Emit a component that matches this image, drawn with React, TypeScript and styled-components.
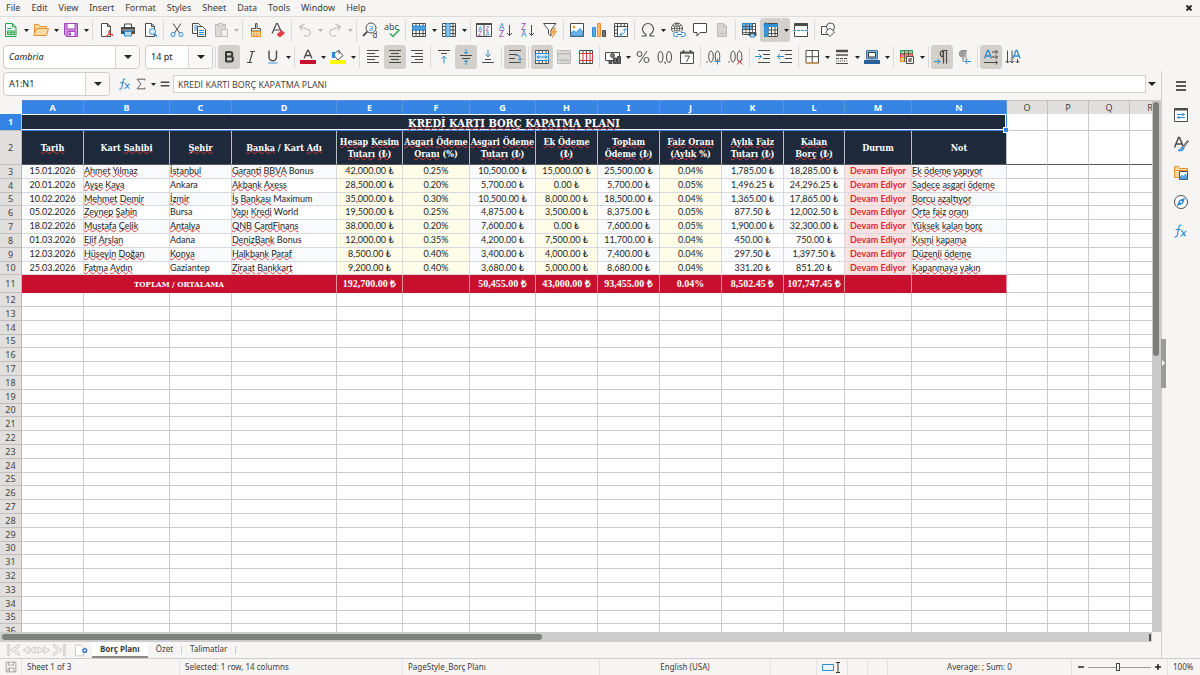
import React from 'react';
import styled, { createGlobalStyle, css } from 'styled-components';

const c = {
  bg: '#f6f5f4',
  line: '#dddbd9',
  pressed: '#d3cfcb',
  text: '#3b3b3b',
  ink: '#4b4b49',
  blue: '#2f8ccf',
  accent: '#3584e4',
  navy: '#1e293b',
  red: '#c8102e',
  grid: '#cbcbcb',
  head: '#e0dfde',
};

const Global = createGlobalStyle`
  * { box-sizing: border-box; }
  body { margin: 0; background: ${c.bg}; color: ${c.text}; font: 9px/12px "Noto Sans", "Open Sans", sans-serif; }
  button, input, select { font: inherit; color: inherit; margin: 0; padding: 0; border: 0; background: none; outline: 0; }
`;

const App_ = styled.div`
  display: flex;
  flex-direction: column;
  height: 100vh;
  overflow: hidden;
`;

/* ---------- menu bar ---------- */
const MenuBar = styled.nav`
  display: flex;
  align-items: center;
  gap: 1px;
  height: 17px;
  padding: 0 4px 0 1px;
  border-bottom: 1px solid ${c.line};
`;
const MenuItem = styled.button`
  height: 16px;
  padding: 0 5px;
`;
const CloseButton = styled.button`
  display: flex;
  margin-left: auto;
  padding: 2px;
`;

/* ---------- toolbars ---------- */
const Toolbar = styled.div`
  display: flex;
  align-items: center;
  padding: 1px 0 0;
`;
const FormatBar = styled(Toolbar)`
  padding: 3px 0 2px 3px;
`;
const ToolButton = styled.button<{ $on?: boolean }>`
  display: flex;
  align-items: center;
  justify-content: center;
  flex: none;
  width: 22px;
  height: 24px;
  border-radius: 3px;
  background: ${p => (p.$on ? c.pressed : 'transparent')};
`;
const DropButton = styled.button<{ $off?: boolean; $on?: boolean }>`
  display: flex;
  align-items: center;
  justify-content: center;
  flex: none;
  width: 8px;
  height: 24px;
  border-radius: 0 3px 3px 0;
  color: ${p => (p.$off ? '#b5b3b0' : '#222')};
  background: ${p => (p.$on ? c.pressed : 'transparent')};
`;
const Separator = styled.span`
  flex: none;
  width: 1px;
  height: 22px;
  margin: 0 2px;
  background: ${c.line};
`;
const Combo = styled.label<{ $w: number }>`
  display: grid;
  grid-template-columns: 1fr 24px;
  flex: none;
  width: ${p => p.$w}px;
  height: 24px;
  border: 1px solid #cfccc9;
  border-radius: 4px;
  background: #fff;
  overflow: hidden;
`;
const ComboSelect = styled.select<{ $italic?: boolean }>`
  grid-area: 1 / 1 / 2 / 3;
  appearance: none;
  padding-left: 5px;
  color: #222;
  font-style: ${p => (p.$italic ? 'italic' : 'normal')};
`;
const ComboArrow = styled.span`
  grid-area: 1 / 2;
  display: flex;
  align-items: center;
  justify-content: center;
  border-left: 1px solid #dad7d4;
  background: #f9f8f7;
  color: #222;
  pointer-events: none;
`;
const Gap = styled.span`
  flex: none;
  width: 5px;
`;

/* ---------- work area ---------- */
const Work = styled.div`
  display: flex;
  flex: 1;
  min-height: 0;
`;
const Document = styled.main`
  display: flex;
  flex-direction: column;
  flex: 1;
  min-width: 0;
`;
const FormulaBar = styled.div`
  display: flex;
  align-items: center;
  height: 29px;
  padding: 1px 5px 4px 3px;
`;
const FormulaTools = styled.div`
  display: flex;
  align-items: center;
  padding: 0 0 0 7px;
`;
const SmallTool = styled.button<{ $w: number }>`
  display: flex;
  align-items: center;
  justify-content: center;
  width: ${p => p.$w}px;
  height: 24px;
`;
const FormulaInput = styled.input`
  flex: 1;
  min-width: 0;
  height: 18px;
  padding: 0 4px;
  border: 1px solid #d2cfcc;
  background: #fff;
  margin-right: 2px;
  font-family: "Open Sans", "Noto Sans", sans-serif;
`;
const SheetArea = styled.div`
  display: flex;
  flex: 1;
  min-height: 0;
`;
const Viewport = styled.div`
  flex: 1;
  min-width: 0;
  overflow: hidden;
  background: #fff;
`;
const VTrack = styled.div`
  flex: none;
  width: 9px;
  padding: 2px 2px 0 1px;
  background: #cacaca;
`;
const VThumb = styled.div`
  height: 48%;
  border-radius: 3px;
  background: #7d7d7b;
`;
const HTrack = styled.div`
  display: flex;
  align-items: center;
  justify-content: space-between;
  height: 10px;
  margin-right: 9px;
  padding: 0 1px 0 2px;
  background: #cdcdcd;
`;
const HThumb = styled.div`
  width: 47%;
  height: 6px;
  border-radius: 3px;
  background: #7f817e;
`;
const HGrip = styled.div`
  width: 2px;
  height: 7px;
  background: #555;
`;

/* ---------- sheet ---------- */
const Sheet = styled.table`
  table-layout: fixed;
  width: 0;
  border-spacing: 0;
  font-size: 9px;
  line-height: 12px;
  white-space: nowrap;
`;
const ColHead = styled.th<{ $sel?: boolean }>`
  height: 14px;
  padding: 0;
  font-weight: ${p => (p.$sel ? 700 : 400)};
  font-size: 9px;
  color: ${p => (p.$sel ? '#fff' : '#444')};
  background: ${p => (p.$sel ? c.accent : c.head)};
  border-right: 1px solid ${p => (p.$sel ? '#5d94d8' : '#c2c0be')};
  border-top: 1px solid ${p => (p.$sel ? '#5a8fd2' : '#c2c0be')};
`;
const Corner = styled.th`
  padding: 0;
  background: ${c.bg};
`;
const RowHead = styled.th<{ $sel?: boolean }>`
  padding: 0;
  font-size: 9px;
  font-weight: ${p => (p.$sel ? 700 : 400)};
  color: ${p => (p.$sel ? '#fff' : '#444')};
  background: ${p => (p.$sel ? c.accent : c.head)};
  border-right: 1px solid #bdbbb9;
  border-bottom: 1px solid #c2c0be;
`;
const Row = styled.tr<{ $h?: number }>`
  height: ${p => p.$h || 14}px;
  ${p => !p.$h && css`&:nth-child(5n) { height: 13px; }`}
`;
const Cell = styled.td`
  padding: 0;
  border-right: 1px solid ${c.grid};
  border-bottom: 1px solid ${c.grid};
`;
const serif = css`
  font-family: "DejaVu Serif Condensed", "Liberation Serif", serif;
  font-weight: 700;
  color: #fff;
  text-align: center;
`;
const TitleCell = styled(Cell)`
  ${serif}
  position: relative;
  padding-top: 1px;
  font-size: 11px;
  line-height: 13px;
  background: ${c.navy};
  border-top: 1px solid #fff;
  border-right: 1px solid ${c.accent};
  border-bottom: 1px solid ${c.accent};
  box-shadow: inset 0 -1px #fff, inset -1px 0 #fff;
`;
const FillHandle = styled.span`
  position: absolute;
  right: -2px;
  bottom: -2px;
  width: 4px;
  height: 4px;
  background: ${c.accent};
  outline: 1px solid #fff;
`;
const HeadCell = styled(Cell)`
  ${serif}
  background: ${c.navy};
  border-right-color: #b9bec6;
  border-bottom-color: #55585c;
`;
const FrozenCell = styled(Cell)`
  border-bottom-color: #55585c;
`;
type Kind = 'plain' | 'input' | 'status';
const DataCell = styled(Cell)<{ $kind: Kind; $left?: boolean; $odd?: boolean }>`
  font-family: Lato, "Noto Sans", sans-serif;
  line-height: 11px;
  vertical-align: top;
  font-weight: ${p => (p.$kind === 'status' ? 700 : 400)};
  color: ${p => (p.$kind === 'status' ? '#e0282e' : '#1c1c1c')};
  text-align: ${p => (p.$left ? 'left' : 'center')};
  background: ${p => (p.$kind === 'input' ? '#fffde7' : p.$kind === 'status' ? '#fee2e2' : p.$odd ? '#f8fafc' : '#fff')};
  border-color: #d6dae0;
`;
const TotalCell = styled(Cell)<{ $label?: boolean }>`
  ${serif}
  background: ${c.red};
  border-right-color: #e2909c;
  border-bottom-color: ${c.red};
  ${p => (p.$label ? css`font-size: 8px;` : css`font-family: "Liberation Serif", serif; font-size: 10px;`)}
`;
const Misspelt = styled.span`
  text-decoration: underline wavy #e23b3b 1px;
  text-decoration-skip-ink: none;
  text-underline-offset: -1px;
`;

/* ---------- tabs ---------- */
const TabBar = styled.div`
  display: flex;
  align-items: stretch;
  height: 16px;
  padding-left: 6px;
  font-size: 8px;
`;
const TabNav = styled.button`
  display: flex;
  align-items: center;
  justify-content: center;
  width: 15px;
`;
const AddSheet = styled.button`
  display: flex;
  align-items: center;
  margin: 0 4px 0 9px;
`;
const Tab = styled.button<{ $on?: boolean }>`
  padding: 0 8px;
  font-weight: ${p => (p.$on ? 700 : 400)};
  background: ${p => (p.$on ? '#fff' : 'transparent')};
  border-bottom: 2px solid ${p => (p.$on ? '#8b8b89' : 'transparent')};
`;
const TabLine = styled.span`
  width: 1px;
  height: 8px;
  margin-top: 4px;
  background: #c9c7c5;
`;

/* ---------- sidebar ---------- */
const Sidebar = styled.aside`
  position: relative;
  display: flex;
  flex-direction: column;
  align-items: center;
  flex: none;
  width: 39px;
  border-left: 1px solid #cfcdcb;
`;
const SideButton = styled.button`
  display: flex;
  align-items: center;
  justify-content: center;
  width: 28px;
  height: 29px;
`;
const SideGrip = styled.span`
  position: absolute;
  left: -1px;
  bottom: 46%;
  width: 5px;
  height: 49px;
  background: #9a9a98;
  display: flex;
  align-items: center;
  justify-content: center;
`;

/* ---------- status bar ---------- */
const StatusBar = styled.footer`
  display: grid;
  grid-template-columns: 22px 158fr 223fr 197fr 171fr 46px 31px 20px 20px 184fr 96px 32px;
  height: 17px;
  border-top: 1px solid #cfcdcb;
  font-size: 8px;
`;
const Field = styled.div<{ $center?: boolean }>`
  display: flex;
  align-items: center;
  justify-content: ${p => (p.$center ? 'center' : 'flex-start')};
  padding: 0 5px;
  border-right: 1px solid #e6e4e2;
  white-space: nowrap;
  &:last-child { border-right: 0; }
`;
const ZoomStep = styled.button`
  display: flex;
  flex: none;
`;
const ZoomRange = styled.input`
  appearance: none;
  flex: 1;
  min-width: 0;
  height: 8px;
  margin: 0 3px;
  background: linear-gradient(#999, #999) center / 100% 1px no-repeat;
  &::-webkit-slider-thumb {
    appearance: none;
    width: 4px;
    height: 8px;
    border: 1px solid #444;
    background: #fff;
  }
`;

/* ---------- icons ---------- */
const G = '#bdbbb8';
const B = c.blue;
const P = '#a347ba';
const O = '#e8912d';
const N = '#c6c4c2';
const doc = 'M3.5 1.5h6l3 3v10h-9z M9.5 1.5v3h3';
const tableGrid = 'M1.5 1.5h13v13h-13z M1.5 4.5h13 M1.5 8h13 M1.5 11.5h13 M5 1.5v13 M8.5 1.5v13 M12 1.5v13';

const art: Record<string, React.ReactNode> = {
  new: <><path d="M2.5 1.5h7l3.5 3.500v9.500h-10.500z" fill="#e9f7ee" stroke="#2ba24f" /><path d="M9.500 1.500v3.500h3.500" stroke="#2ba24f" /><path d="M4.500 6.500h4M4.500 9h7v3.500h-7zM8 9v3.500M4.500 10.800h7" stroke="#2ba24f" /></>,
  open: <><path d="M1.500 13V2.500h4l1.500 2h6.500V7" fill="#fbd9a2" stroke={O} /><path d="M.8 13.500 3.500 6.500h12L13.500 13.500z" fill="#fbd9a2" stroke={O} /></>,
  save: <><path d="M1.500 1.500h13v13h-11l-2-2z" fill="#cf8bdc" stroke={P} /><path d="M4 1.500h8v5.500H4z" fill="#fff" stroke={P} /><path d="M5 9.500h7v5H5z" fill="#fff" stroke={P} /><path d="M6 10.500h2v3H6z" fill={P} stroke="none" /></>,
  pdf: <><path d={doc} fill="#fff" /><path d="M8.500 14.500c1.500-1 3-3.500 3-6.500M10.500 9.500c.5 2 2.500 3.500 4.500 4M8 14.500c1-2 4-2.500 7-2" stroke="#e03e3e" /></>,
  print: <><path d="M4.500 5.500v-3.500h7v3.500" fill="#fff" /><path d="M1.500 5.500h13v6h-13z" fill="#4b4b49" /><path d="M2 8h12" stroke="#a9c9e2" /><path d="M4.500 9.500h7v4.500h-7z" fill="#b9dcf5" stroke={B} /></>,
  preview: <><path d={doc} fill="#fff" /><circle cx="10.500" cy="9.500" r="3" fill="#dceefb" stroke={B} /><path d="M12.500 11.700l2.500 2.800" stroke={B} strokeWidth="1.500" /></>,
  cut: <><path d="M4 1.500l6.500 9.500M12 1.500L5.500 11" /><circle cx="4" cy="12.500" r="2" stroke={B} /><circle cx="12" cy="12.500" r="2" stroke={B} /></>,
  copy: <><path d="M1.500 1.500h6l2 2v8h-8z" fill="#fff" /><path d="M6.500 4.500h5l3 3v7h-8z" fill="#fff" /><path d="M3 4h4M3 6h3M3 8h3" stroke={B} /><path d="M8 8.500h5M8 10.500h5M8 12.500h5" stroke={B} /></>,
  paste: <><path d="M2.500 2.500h10v12h-10z" fill="#dddbd8" stroke={G} /><path d="M5.500 1.500h4v2.500h-4z" fill="#eee" stroke={G} /><path d="M8.500 7.500h6v7h-6z" fill="#f1f0ef" stroke={G} /></>,
  clone: <><path d="M7.500 1.500h1.500v5h3.500v2.500h-9V6.500h4z" fill="#fff" /><path d="M3.500 9.500h9v5h-9z" fill="#fad39a" stroke={O} /><path d="M6 11v3.500M9 11v3.500" stroke={O} /></>,
  clear: <><path d="M2 11.500L6.500 1.500h1L11 9M3.700 8h6" strokeWidth="1.200" /><path d="M7 12.500l4.500-4 3 2.500-4.500 4z" fill="#e23d4b" stroke="#e23d4b" /></>,
  undo: <path d="M2 6.500h8.500a3.500 3.500 0 0 1 0 7H9M5.500 2.500L1.800 6.500l3.700 3.500" transform="rotate(20 8 8)" stroke={G} />,
  redo: <path d="M14 6.500H5.500a3.500 3.500 0 0 0 0 7H7M10.500 2.500l3.700 4-3.700 3.500" transform="rotate(-20 8 8)" stroke={G} />,
  find: <><circle cx="9" cy="6" r="5" fill="#fff" /><path d="M5.300 9.700L1 14" strokeWidth="1.800" /><text x="6.700" y="8.500" fontSize="8" fill={B}>a</text><text x="10.500" y="15.500" fontSize="8">d</text></>,
  spell: <><text x="0" y="8" fontSize="9">abc</text><path d="M6 11.500l3 3 6.500-7" stroke="#2ba24f" strokeWidth="1.400" /></>,
  rows: <><path d={tableGrid} fill="#fff" /><path d="M1.500 4h13v4h-13z" fill="#4ba3e3" stroke={B} /></>,
  cols: <><path d={tableGrid} fill="#fff" /><path d="M5 1.500h4v13H5z" fill="#8cc4ee" stroke={B} /></>,
  sort: <><path d="M.5 1.500h15v13H.5zM8 3v11.500" fill="#fff" /><path d="M.5 1.500h15v1H.5z" /><text x="2" y="8.700" fontSize="6.500" fill={B}>A</text><text x="2" y="14.200" fontSize="6.500" fill={P}>Z</text><text x="9.500" y="8.700" fontSize="6.500" fill={P}>Z</text><text x="9.500" y="14.200" fontSize="6.500" fill={B}>A</text></>,
  asc: <><text x="1" y="7.500" fontSize="8.500" fill={B}>A</text><text x="1" y="15" fontSize="8.500" fill={P}>Z</text><path d="M11.500 3v10.500M9 11l2.500 2.500L14 11" /></>,
  desc: <><text x="1" y="7.500" fontSize="8.500" fill={P}>Z</text><text x="1" y="15" fontSize="8.500" fill={B}>A</text><path d="M11.500 3v10.500M9 11l2.500 2.500L14 11" /></>,
  filter: <><path d="M1.500 1.500h12.500L9 8v6l-2.500-2V8z" fill="#fff" /><path d="M12 6l-3 5h2.500l-1 4.500L14.500 9.500H12L13.500 6z" fill="#f6b262" stroke={O} strokeWidth=".7" /></>,
  image: <><path d="M1.500 1.500h13v13h-13z" fill="#fff" /><circle cx="5" cy="5" r="1.300" fill={O} stroke="none" /><path d="M2 14v-3l3-2.500 2 2L11 6.500l3 3.500v4z" fill="#6bb1e6" stroke={B} strokeWidth=".8" /></>,
  chart: <><path d="M1.500 5.500h3v9h-3z" fill="#5aa9e4" stroke={B} /><path d="M6.500 1.500h3v13h-3z" fill="#fbb970" stroke={O} /><path d="M11.500 8.500h3v6h-3z" fill="#777" /></>,
  pivot: <><path d="M1.500 1.500h13v13h-13zM1.500 4.500h13M4.500 1.500v13M8 1.500v3M11.300 1.500v3M1.500 8h3M1.500 11.300h3" fill="#fff" /><path d="M7 12.500c4 0 5-2 5-5.500M10 8.500l2-2 2 2M9 10.500l-2 2 2 2" stroke={B} /></>,
  omega: <path d="M1.500 14h4.500v-1.500C3.500 11 2.500 9.500 2.500 7a5.500 5.500 0 0 1 11 0c0 2.500-1 4-3.500 5.500V14h4.500" strokeWidth="1.100" />,
  link: <><circle cx="7" cy="6.500" r="5.500" fill="#fff" /><path d="M1.500 6.500h11M7 1v11M2.500 3.500c2.500 1 6.500 1 9 0M2.500 9.500c2.500-1 6.500-1 9 0M7 1c-3.500 3-3.500 8 0 11M7 1c3.500 3 3.500 8 0 11" strokeWidth=".8" /><path d="M2.500 9.500h13v6h-13z" fill={c.bg} stroke="none" /><path d="M8 10.500H5.500a2 2 0 0 0 0 4H8M11 10.500h2.500a2 2 0 0 1 0 4H11M7 12.500h5" stroke={B} /></>,
  comment: <path d="M1.500 1.500h13v9H8l-3 3.500v-3.500H1.500z" fill="#fff" />,
  header: <><path d={doc} fill="#d6d5d4" stroke={G} /><path d="M5 11.500h6" stroke={G} /></>,
  area: <><path d="M1.500 1.500h13v11h-13z" fill="#fff" /><path d="M1.500 1.500h10v6h-10z" fill="#62b0e8" stroke={B} /><path d="M1.500 4.500h13M1.500 7.500h13M1.500 10.500h13M5 1.500v11M8.500 1.500v11M11.500 1.500v11" strokeWidth=".8" /><path d="M8 10.500h7v3H8z" fill="#4b4b49" /><path d="M9.500 12h4v3h-4z" fill="#b9dcf5" stroke={B} /></>,
  freeze: <><path d={tableGrid} fill="#fff" /><path d="M1.500 2.500h13v2h-13zM1.500 2.500h3.500v12H1.500z" fill="#3a97dd" stroke={B} /><path d="M3 0v6M0 3h6M1 1l4 4M5 1L1 5" stroke={B} strokeWidth=".8" /></>,
  split: <><path d="M1.500 1.500h13v13h-13z" fill="#fff" /><path d="M1.500 2h13v1.500h-13z" fill="#4b4b49" /><path d="M0 8.500h16" stroke={c.bg} strokeWidth="2" /><path d="M0 8.500h16" stroke={B} strokeDasharray="3 1" /></>,
  shapes: <><path d="M1.500 4.500h8v8h-8z" fill="#fff" /><circle cx="10.500" cy="5" r="4" fill="#fff" /><path d="M10 6l4.500 4-4.500 4.500L5.500 10z" fill="#fff" /></>,
  italic: <path d="M7 2.500h5M4 13.500h5M9.700 2.500L6.500 13.500" strokeWidth="1.200" />,
  underline: <><path d="M4 1.500v6.500a3.700 3.700 0 0 0 7.500 0V1.500" strokeWidth="1.400" /><path d="M3 14h9.500" stroke="#7db7e6" strokeWidth="1.500" /></>,
  bold: <path d="M5 2.500v10.500M5 3h4a2.200 2.200 0 0 1 0 4.500H5h4.500a2.500 2.500 0 0 1 0 5H5" strokeWidth="2" stroke="#3a3a38" />,
  color: <><path d="M4 9.500L7.500 1.500h1L12 9.500M5.500 6.500h5" strokeWidth="1.300" /><path d="M0 11h16v4H0z" fill={c.red} stroke="none" /></>,
  fill: <><path d="M4.500 4.500l4-3 4.500 5-5 4.500-4-4.500z" fill="#fff" /><path d="M3.500 3v6" stroke={B} strokeWidth="3" /><path d="M9 5V1" /><path d="M0 11h16v4H0z" fill="#ffff00" stroke="none" /></>,
  left: <path d="M2 1.500h12M2 4.500h8M2 7.500h12M2 10.500h8M2 13.500h12" />,
  center: <path d="M2 1.500h12M4 4.500h8M2 7.500h12M4 10.500h8M2 13.500h12" />,
  right: <path d="M2 1.500h12M6 4.500h8M2 7.500h12M6 10.500h8M2 13.500h12" />,
  top: <><path d="M2 1.500h12M5 4.500h6" /><path d="M8 14.500V7.500M5.500 9.700L8 7.200l2.500 2.500" stroke={B} /></>,
  middle: <><path d="M2 6.500h12M4 9.500h8" /><path d="M8 0v5M6 3l2 2 2-2M8 16v-5M6 13l2-2 2 2" stroke={B} /></>,
  bottom: <><path d="M5 10.500h6M2 13.500h12" /><path d="M8 1v7M5.500 5.500L8 8l2.500-2.500" stroke={B} /></>,
  wrap: <><path d="M2 1.500h12M2 5.500h8M2 9.500h6M2 13.500h12" /><path d="M9 6.500h2a2 2 0 0 1 2 2v2.500M11 9.500l2 2 2-2" stroke={B} /></>,
  merge: <><path d={tableGrid} fill="#fff" /><path d="M1.500 4.500h13v7h-13z" fill="#d6ecfb" stroke={B} /><path d="M3 8h10M5 6.500L3 8l2 1.500M11 6.500L13 8l-2 1.500" stroke={B} /></>,
  mergeOff: <><path d={tableGrid} fill="#e4e3e1" stroke={G} /><path d="M1.500 5h13v6h-13z" fill="#dddbd9" stroke={G} /></>,
  unmerge: <><path d={tableGrid} fill="#fff" /><path d="M1.500 4.500h13v7h-13zM5 4.500v7M8.500 4.500v7M12 4.500v7" fill="#fff" stroke="#de3b3b" /></>,
  currency: <><path d="M.5 3.500h14v8H.5z" fill="#fff" /><circle cx="7.500" cy="6.500" r="2" fill="#777" /><path d="M4 11.500h3v3H4zM8.500 9h3v5.500h-3zM12.500 7.500h3v7h-3z" fill="#666" stroke="#444" /></>,
  percent: <><circle cx="4.500" cy="5" r="2.500" /><circle cx="11.500" cy="11" r="2.500" /><path d="M12 2L4 14" /></>,
  number: <><ellipse cx="3.500" cy="8" rx="2.500" ry="5.500" /><ellipse cx="12" cy="8" rx="2.500" ry="5.500" /><path d="M7.300 13h1v2" /></>,
  date: <><path d="M1.500 3h13v11.500h-13z" fill="#fff" /><path d="M1.500 4h13M4.500 1v3M11.500 1v3" strokeWidth="1.600" /><path d="M5.500 7h5L7.500 13" /></>,
  addDec: <><path d="M.5 13h1" strokeWidth="1.500" /><ellipse cx="5" cy="7.500" rx="2.300" ry="5.500" /><ellipse cx="11.500" cy="7.500" rx="2.300" ry="5.500" /><path d="M11.500 9.500v6M8.500 12.500h6" stroke={B} /></>,
  delDec: <><path d="M.5 13h1" strokeWidth="1.500" /><ellipse cx="5" cy="7.500" rx="2.300" ry="5.500" /><ellipse cx="11.500" cy="7.500" rx="2.300" ry="5.500" /><path d="M9 10l5.500 5.500M14.500 10L9 15.500" stroke="#e03e3e" /></>,
  indent: <><path d="M3 1.500h12M8 5.500h7M8 9.500h7M3 13.500h12" /><path d="M0 7.500h6.500M4 5l2.500 2.500L4 10" stroke={B} /></>,
  outdent: <><path d="M3 1.500h12M8 5.500h7M8 9.500h7M3 13.500h12" /><path d="M7 7.500H.5M3 5L.5 7.500 3 10" stroke={B} /></>,
  border: <><path d="M2 1.500h12.500v12.500H2zM8.200 1.500v12.500M2 7.700h12.500" fill="#fff" /><path d="M2 14h12.500" stroke={O} /></>,
  lines: <><path d="M2 2h12" strokeWidth="2.500" /><path d="M2 6h12" strokeWidth="1.500" /><path d="M2 9.500h12" strokeDasharray="3 1" /><path d="M2 12h12" strokeDasharray="1 1" /><path d="M2 14.500h12" /></>,
  borderColor: <><path d="M2.500 1.500h11v8.500h-11z" fill="#7db7e6" stroke="#4a6f90" /><path d="M4.500 3.500h7v4.500h-7z" fill="#fff" stroke="#333" /><path d="M0 11h16v4H0z" fill="#2a6099" stroke="none" /></>,
  cond: <><path d="M1.500 1.500h12v11h-12z" fill="#fff" /><path d="M1.500 1.500h12v3.500h-12z" fill="#8fd3a3" stroke="#2ba24f" /><path d="M1.500 5h12v3.500h-12z" fill="#ef8f8f" stroke="#de3b3b" /><path d="M1.500 8.500h6v4h-6z" fill="#f7cf8b" stroke={O} /><path d="M5.500 1.500v11M9.500 1.500v6" strokeWidth=".8" /><path d="M7.500 7.500h7v7h-7z" fill="#fff" /><path d="M9 10h4M9 12h4M12 9l-2 4" /></>,
  ltr: <><path d="M13.500 1.500H9a3.300 3.300 0 0 0 0 6.500V1.500M9.500 1.500v13M12.500 1.500v13" strokeWidth="1.200" /><path d="M0 12.500h6M3.500 10L6 12.500 3.500 15" stroke={B} /></>,
  rtl: <><path d="M10.500 1.500H6a3.300 3.300 0 0 0 0 6.500V1.500h1V13M10 1.500v9" fill="#aaa" stroke="#888" /><path d="M15 12.500H9M11.500 10L9 12.500l2.500 2.500" stroke={B} /></>,
  lrtb: <><path d="M1.500 9.500L4.500 1.500h1l3 8M2.700 7h4.800" stroke={B} strokeWidth="1.300" /><path d="M9 3h5.500M12.500 1l2 2-2 2M9 8h5.500M12.500 6l2 2-2 2M1 13.500h13.500M12.500 11.500l2 2-2 2" /></>,
  tbrl: <><path d="M8 9.500L11 1.500h1l3 8M9.200 7H14" stroke={B} strokeWidth="1.300" /><path d="M2.500 1.500v12.500M.5 12l2 2 2-2M7 1.500v12.500M5 12l2 2 2-2M12.500 10v4M10.500 12l2 2 2-2" /></>,
  fx: <><path d="M8.500 2.500c-2-1-2.500.5-3 3.500l-1 5.500c-.4 2-1.200 3-3 2.200M2.500 6.500h5" stroke={B} strokeWidth="1.200" /><path d="M8 8c2-1 2.500 5 5 5M13.500 8c-2 0-4 5.500-6 5" stroke={B} strokeWidth="1.200" /></>,
  sum: <path d="M12.500 4V2.500h-9L8 8l-4.500 5.500h9V12" />,
  equals: <path d="M3 6h10M3 10h10" strokeWidth="1.700" />,
  menu: <path d="M3 4h10M3 8h10M3 12h10" stroke="#222" strokeWidth="1.600" />,
  props: <><path d="M1.500 1.500h13v13h-13z" fill="#fff" /><path d="M1.500 2.500h13" strokeWidth="2" /><path d="M4 7.500h8M4 10.500h8M10 6v3M6 9v3" stroke={B} /></>,
  styles: <><path d="M1.500 11.500L5.500 1.500h1L10 10M3 8h6" strokeWidth="1.500" /><path d="M15.500 5l-5 7-1-1 4.500-6z" fill="#fff" /><path d="M5 14.500c3 1 6 0 6-2.500l-2-1c-1.500.5-1 2.500-4 3.500z" fill="#5aa9e4" stroke={B} /></>,
  gallery: <><path d="M1.500 12.500v-11h4l1 2h8v2h-11z" fill="#fbd9a2" stroke={O} /><path d="M1.500 5.500h13v7h-13z" fill="#fbd9a2" stroke={O} /><path d="M6.500 6.500h8v8h-8z" fill="#fff" /><path d="M7 14v-2l2-2 1.500 1.500L12.500 9l1.500 2v3z" fill="#5aa9e4" stroke={B} strokeWidth=".6" /></>,
  navigator: <><circle cx="8" cy="8" r="6.500" fill="#fff" /><path d="M11.500 4.500L9.500 9.500 4.500 11.500 6.500 6.500z" fill={B} stroke={B} /><circle cx="8" cy="8" r="1" fill="#fff" stroke="none" /></>,
  first: <path d="M1 1.500h1.500v13H1zM14 1.500L4.500 8l9.500 6.500v-3L9 8l5-3.500z" stroke={N} />,
  prev: <path d="M8 4L1.500 8 8 12zM15 4L8.500 8l6.500 4z" stroke={N} />,
  next: <path d="M1 4l6.500 4L1 12zM8 4l6.500 4L8 12z" stroke={N} />,
  last: <path d="M13.500 1.500H15v13h-1.500zM2 1.500L11.500 8 2 14.500v-3L7 8 2 4.500z" stroke={N} />,
  addSheet: <><path d="M.5 1.500h7l3 3v10H.5z" fill="#fff" stroke="#c4c2c0" /><circle cx="12" cy="8" r="3.200" fill="#3a6fc4" stroke="none" /><path d="M12 6.200v3.600M10.200 8h3.600" stroke="#fff" /></>,
  disk: <path d="M1.500 1.500h13v13h-13zM4.500 1.500v4h7v-4M4 14.500v-5h8v5M6 10v4" stroke="#8d8b89" />,
};

const Svg = styled.svg`
  display: block;
  flex: none;
  overflow: visible;
  text { stroke: none; font-family: "Noto Sans", sans-serif; }
  text:not([fill]) { fill: ${c.ink}; }
`;
const Icon = ({ name, size = 16 }: { name: string; size?: number }) => (
  <Svg width={size} height={size} viewBox="0 0 16 16" fill="none" stroke={c.ink} aria-hidden="true">
    {art[name]}
  </Svg>
);
const Arrow = ({ big }: { big?: boolean }) => (
  <Svg width={big ? 8 : 5} height={big ? 4 : 3} viewBox="0 0 8 4" preserveAspectRatio="none" aria-hidden="true">
    <path d="M0 0h8L4 4z" fill="currentColor" />
  </Svg>
);

/* [icon, label, flags]: ">" has a menu, "~" has a greyed menu, "!" is pressed; "|" is a separator */
type Item = [string, string, string?];
const standard: Item[] = [
  ['new', 'New', '>'], ['open', 'Open', '>'], ['save', 'Save', '>'], ['|', ''],
  ['pdf', 'Export as PDF'], ['print', 'Print'], ['preview', 'Print Preview'], ['|', ''],
  ['cut', 'Cut'], ['copy', 'Copy'], ['paste', 'Paste', '~'], ['|', ''],
  ['clone', 'Clone Formatting'], ['clear', 'Clear Formatting'], ['|', ''],
  ['undo', 'Undo', '~'], ['redo', 'Redo', '~'], ['|', ''],
  ['find', 'Find and Replace'], ['spell', 'Spelling'], ['|', ''],
  ['rows', 'Row', '>'], ['cols', 'Column', '>'], ['|', ''],
  ['sort', 'Sort'], ['asc', 'Sort Ascending'], ['desc', 'Sort Descending'], ['filter', 'AutoFilter'], ['|', ''],
  ['image', 'Insert Image'], ['chart', 'Insert Chart'], ['pivot', 'Pivot Table'], ['|', ''],
  ['omega', 'Special Character', '>'], ['link', 'Hyperlink'], ['comment', 'Comment'], ['header', 'Headers and Footers'], ['|', ''],
  ['area', 'Print Area'], ['freeze', 'Freeze Rows and Columns', '!>'], ['split', 'Split Window'], ['|', ''],
  ['shapes', 'Draw Functions'],
];
const formatting: Item[] = [
  ['bold', 'Bold', '!'], ['italic', 'Italic'], ['underline', 'Underline', '>'], ['|', ''],
  ['color', 'Font Color', '>'], ['fill', 'Background Color', '>'], ['|', ''],
  ['left', 'Align Left'], ['center', 'Center Horizontally', '!'], ['right', 'Align Right'], ['|', ''],
  ['top', 'Align Top'], ['middle', 'Center Vertically', '!'], ['bottom', 'Align Bottom'], ['|', ''],
  ['wrap', 'Wrap Text', '!'], ['|', ''],
  ['merge', 'Merge and Center', '!'], ['mergeOff', 'Merge Cells'], ['unmerge', 'Unmerge Cells'], ['|', ''],
  ['currency', 'Currency', '>'], ['percent', 'Percent'], ['number', 'Number'], ['date', 'Date'], ['|', ''],
  ['addDec', 'Add Decimal Place'], ['delDec', 'Delete Decimal Place'], ['|', ''],
  ['indent', 'Increase Indent'], ['outdent', 'Decrease Indent'], ['|', ''],
  ['border', 'Borders', '>'], ['lines', 'Border Style', '>'], ['borderColor', 'Border Color', '>'], ['|', ''],
  ['cond', 'Conditional Formatting', '>'], ['|', ''],
  ['ltr', 'Left-To-Right', '!'], ['rtl', 'Right-To-Left'], ['|', ''],
  ['lrtb', 'Text direction from left to right', '!'], ['tbrl', 'Text direction from top to bottom'],
];
const Tools = ({ items }: { items: Item[] }) => (
  <>
    {items.map(([name, label, flags = ''], i) =>
      name === '|' ? <Separator key={i} /> : (
        <React.Fragment key={i}>
          <ToolButton type="button" aria-label={label} $on={flags.includes('!')}><Icon name={name} /></ToolButton>
          {/[>~]/.test(flags) && (
            <DropButton type="button" aria-label={`${label} options`} $off={flags.includes('~')} $on={flags.includes('!')}><Arrow /></DropButton>
          )}
        </React.Fragment>
      ))}
  </>
);

/* ---------- data ---------- */
const columns: [string, number][] = [
  ['A', 62], ['B', 86], ['C', 62], ['D', 105], ['E', 66], ['F', 67], ['G', 66], ['H', 62], ['I', 62],
  ['J', 62], ['K', 62], ['L', 61], ['M', 67], ['N', 95], ['O', 41], ['P', 41], ['Q', 41], ['R', 41],
];
const heads = [
  '_Tarih', 'Kart _Sahibi', '_Şehir', '_Banka / Kart _Adı', '_Hesap _Kesim\n_Tutarı _(₺)', '_Asgari _Ödeme\n_Oranı (%)',
  '_Asgari _Ödeme\n_Tutarı _(₺)', '_Ek _Ödeme\n_(₺)', '_Toplam\n_Ödeme _(₺)', '_Faiz _Oranı\n_(Aylık %)',
  '_Aylık _Faiz\n_Tutarı _(₺)', '_Kalan\n_Borç _(₺)', 'Durum', 'Not',
];
const records = [
  '15.01.2026|_Ahmet _Yılmaz|_İstanbul|_Garanti _BBVA Bonus|42,000.00 ₺|0.25%|10,500.00 ₺|15,000.00 ₺|25,500.00 ₺|0.04%|1,785.00 ₺|18,285.00 ₺|Devam Ediyor|_Ek _ödeme _yapıyor',
  '20.01.2026|_Ayşe _Kaya|Ankara|_Akbank _Axess|28,500.00 ₺|0.20%|5,700.00 ₺|0.00 ₺|5,700.00 ₺|0.05%|1,496.25 ₺|24,296.25 ₺|Devam Ediyor|_Sadece _asgari _ödeme',
  '10.02.2026|_Mehmet _Demir|_İzmir|_İş _Bankası Maximum|35,000.00 ₺|0.30%|10,500.00 ₺|8,000.00 ₺|18,500.00 ₺|0.04%|1,365.00 ₺|17,865.00 ₺|Devam Ediyor|_Borcu _azaltıyor',
  '05.02.2026|_Zeynep _Şahin|Bursa|_Yapı _Kredi World|19,500.00 ₺|0.25%|4,875.00 ₺|3,500.00 ₺|8,375.00 ₺|0.05%|877.50 ₺|12,002.50 ₺|Devam Ediyor|_Orta _faiz _oranı',
  '18.02.2026|_Mustafa _Çelik|_Antalya|_QNB _CardFinans|38,000.00 ₺|0.20%|7,600.00 ₺|0.00 ₺|7,600.00 ₺|0.05%|1,900.00 ₺|32,300.00 ₺|Devam Ediyor|_Yüksek _kalan _borç',
  '01.03.2026|_Elif _Arslan|Adana|_DenizBank Bonus|12,000.00 ₺|0.35%|4,200.00 ₺|7,500.00 ₺|11,700.00 ₺|0.04%|450.00 ₺|750.00 ₺|Devam Ediyor|_Kısmi _kapama',
  '12.03.2026|_Hüseyin _Doğan|_Konya|_Halkbank _Paraf|8,500.00 ₺|0.40%|3,400.00 ₺|4,000.00 ₺|7,400.00 ₺|0.04%|297.50 ₺|1,397.50 ₺|Devam Ediyor|_Düzenli _ödeme',
  '25.03.2026|_Fatma _Aydın|Gaziantep|_Ziraat _Bankkart|9,200.00 ₺|0.40%|3,680.00 ₺|5,000.00 ₺|8,680.00 ₺|0.04%|331.20 ₺|851.20 ₺|Devam Ediyor|_Kapanmaya _yakın',
].map(r => r.split('|'));
const totals = ['192,700.00 ₺', '', '50,455.00 ₺', '43,000.00 ₺', '93,455.00 ₺', '0.04%', '8,502.45 ₺', '107,747.45 ₺', '', ''];

/* Words marked with a leading underscore get the spelling squiggle. */
const Spelled = ({ text }: { text: string }) => (
  <>
    {text.split(/([ \n])/).map((w, i) =>
      w === '\n' ? <br key={i} /> : w[0] === '_' ? <Misspelt key={i}>{w.slice(1)}</Misspelt> : w)}
  </>
);
const kindOf = (i: number): Kind => (i === 12 ? 'status' : [4, 5, 7, 9].includes(i) ? 'input' : 'plain');
const Blank = ({ n, frozen }: { n: number; frozen?: boolean }) => (
  <>{Array.from({ length: n }, (_, i) => (frozen ? <FrozenCell key={i} /> : <Cell key={i} />))}</>
);

const Grid = () => (
  <Sheet>
    <colgroup>
      <col width={22} />
      {columns.map(([n, w]) => <col key={n} width={w} />)}
    </colgroup>
    <thead>
      <tr>
        <Corner />
        {columns.map(([n], i) => <ColHead key={n} scope="col" $sel={i < 14}>{n}</ColHead>)}
      </tr>
    </thead>
    <tbody>
      <Row $h={17}>
        <RowHead scope="row" $sel>1</RowHead>
        <TitleCell colSpan={14}><Spelled text="_KREDİ _KARTI _BORÇ _KAPATMA _PLANI" /><FillHandle /></TitleCell>
        <Blank n={4} />
      </Row>
      <Row $h={34}>
        <RowHead scope="row">2</RowHead>
        {heads.map((h, i) => <HeadCell key={i}><Spelled text={h} /></HeadCell>)}
        <Blank n={4} frozen />
      </Row>
      {records.map((r, ri) => (
        <Row key={ri}>
          <RowHead scope="row">{ri + 3}</RowHead>
          {r.map((v, i) => (
            <DataCell key={i} $kind={kindOf(i)} $left={[1, 2, 3, 13].includes(i)} $odd={ri % 2 === 0}><Spelled text={v} /></DataCell>
          ))}
          <Blank n={4} />
        </Row>
      ))}
      <Row $h={18}>
        <RowHead scope="row">11</RowHead>
        <TotalCell colSpan={4} $label>TOPLAM / ORTALAMA</TotalCell>
        {totals.map((t, i) => <TotalCell key={i}>{t}</TotalCell>)}
        <Blank n={4} />
      </Row>
      {Array.from({ length: 25 }, (_, i) => (
        <Row key={i}>
          <RowHead scope="row">{i + 12}</RowHead>
          <Blank n={18} />
        </Row>
      ))}
    </tbody>
  </Sheet>
);

export default function App() {
  return (
    <App_>
      <Global />
      <MenuBar>
        {['File', 'Edit', 'View', 'Insert', 'Format', 'Styles', 'Sheet', 'Data', 'Tools', 'Window', 'Help'].map(m => (
          <MenuItem type="button" key={m}>{m}</MenuItem>
        ))}
        <CloseButton type="button" aria-label="Close document">
          <Svg width="10" height="10" viewBox="0 0 10 10" stroke="#222" strokeWidth="1.800"><path d="M2.500 2.500l5 5M7.500 2.500l-5 5" /></Svg>
        </CloseButton>
      </MenuBar>
      <Toolbar role="toolbar" aria-label="Standard"><Tools items={standard} /></Toolbar>
      <FormatBar role="toolbar" aria-label="Formatting">
        <Combo $w={137}>
          <ComboSelect $italic aria-label="Font Name"><option>Cambria</option></ComboSelect>
          <ComboArrow><Arrow big /></ComboArrow>
        </Combo>
        <Gap />
        <Combo $w={68}>
          <ComboSelect aria-label="Font Size"><option>14 pt</option></ComboSelect>
          <ComboArrow><Arrow big /></ComboArrow>
        </Combo>
        <Separator />
        <Tools items={formatting} />
      </FormatBar>
      <Work>
        <Document>
          <FormulaBar>
            <Combo $w={107}>
              <ComboSelect aria-label="Name Box"><option>A1:N1</option></ComboSelect>
              <ComboArrow><Arrow big /></ComboArrow>
            </Combo>
            <FormulaTools>
              <SmallTool type="button" aria-label="Function Wizard" $w={16}><Icon name="fx" size={14} /></SmallTool>
              <SmallTool type="button" aria-label="Select Function" $w={16}><Icon name="sum" size={14} /></SmallTool>
              <DropButton type="button" aria-label="Function list"><Arrow /></DropButton>
              <SmallTool type="button" aria-label="Formula" $w={16}><Icon name="equals" size={14} /></SmallTool>
            </FormulaTools>
            <FormulaInput aria-label="Input line" defaultValue="KREDİ KARTI BORÇ KAPATMA PLANI" />
            <DropButton type="button" aria-label="Expand formula bar"><Arrow big /></DropButton>
          </FormulaBar>
          <SheetArea>
            <Viewport><Grid /></Viewport>
            <VTrack><VThumb /></VTrack>
          </SheetArea>
          <HTrack><HThumb /><HGrip /></HTrack>
          <TabBar>
            {[['first', 'First'], ['prev', 'Previous'], ['next', 'Next'], ['last', 'Last']].map(([n, l]) => (
              <TabNav type="button" key={n} aria-label={`${l} sheet`}><Icon name={n} size={14} /></TabNav>
            ))}
            <AddSheet type="button" aria-label="Add sheet"><Icon name="addSheet" size={13} /></AddSheet>
            <Tab type="button" $on>Borç Planı</Tab>
            <Tab type="button">Özet</Tab>
            <TabLine />
            <Tab type="button">Talimatlar</Tab>
            <TabLine />
          </TabBar>
        </Document>
        <Sidebar>
          {[['menu', 'Sidebar Settings'], ['props', 'Properties'], ['styles', 'Styles'], ['gallery', 'Gallery'], ['navigator', 'Navigator'], ['fx', 'Functions']].map(([n, l]) => (
            <SideButton type="button" key={n} aria-label={l}><Icon name={n} /></SideButton>
          ))}
          <SideGrip><Svg width="3" height="6" viewBox="0 0 3 6"><path d="M0 0l3 3-3 3z" fill="#fff" /></Svg></SideGrip>
        </Sidebar>
      </Work>
      <StatusBar>
        <Field $center><Icon name="disk" size={12} /></Field>
        <Field>Sheet 1 of 3</Field>
        <Field>Selected: 1 row, 14 columns</Field>
        <Field>PageStyle_Borç Planı</Field>
        <Field $center>English (USA)</Field>
        <Field />
        <Field $center>
          <Svg width="22" height="12" viewBox="0 0 22 12" fill="none">
            <path d="M1.500 3.500h11v6h-11z" fill="#eaf4fc" stroke={B} />
            <path d="M15 1.500h4M17 1.500v10M15 11.500h4" stroke="#333" />
          </Svg>
        </Field>
        <Field />
        <Field />
        <Field $center>Average: ; Sum: 0</Field>
        <Field $center>
          <ZoomStep type="button" aria-label="Zoom out"><Svg width="8" height="8" viewBox="0 0 8 8"><path d="M1 4h6" stroke="#222" strokeWidth="1.500" /></Svg></ZoomStep>
          <ZoomRange type="range" aria-label="Zoom" min={0} max={200} defaultValue={95} />
          <ZoomStep type="button" aria-label="Zoom in"><Svg width="8" height="8" viewBox="0 0 8 8"><path d="M1 4h6M4 1v6" stroke="#222" strokeWidth="1.500" /></Svg></ZoomStep>
        </Field>
        <Field>100%</Field>
      </StatusBar>
    </App_>
  );
}
